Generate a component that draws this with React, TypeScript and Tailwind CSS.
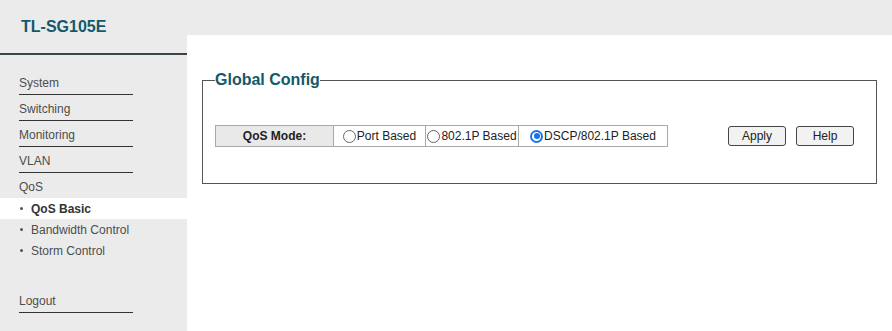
import React from "react";

const menu = ["System", "Switching", "Monitoring", "VLAN"];
const subMenu = [
  { label: "QoS Basic", active: true },
  { label: "Bandwidth Control", active: false },
  { label: "Storm Control", active: false },
];
const modes = [
  { label: "Port Based", width: "w-[92px]", checked: false },
  { label: "802.1P Based", width: "w-[93px]", checked: false },
  { label: "DSCP/802.1P Based", width: "w-[148px]", checked: true },
];

const Radio = ({ checked }: { checked: boolean }) =>
  checked ? (
    <span className="w-[13px] h-[13px] rounded-full bg-[#1a73e8] flex items-center justify-center shrink-0">
      <span className="w-[9px] h-[9px] rounded-full bg-white flex items-center justify-center">
        <span className="w-[6px] h-[6px] rounded-full bg-[#1a73e8]" />
      </span>
    </span>
  ) : (
    <span className="w-[13px] h-[13px] rounded-full border-[1.5px] border-[#666] bg-white shrink-0" />
  );

const App = () => {
  return (
    <div
      className="w-full h-[331px] bg-[#ebebeb] flex text-[12px] overflow-hidden"
      style={{ fontFamily: '"Liberation Sans", Arial, sans-serif' }}
    >
      {/* sidebar */}
      <div className="w-[187px] shrink-0 flex flex-col">
        <div className="h-[55px] border-b-2 border-[#3a464b] pt-[18px] pl-[21px]">
          <div className="text-[16px] leading-[18px] font-bold text-[#13596a]">
            TL-SG105E
          </div>
        </div>
        <div className="mt-[14px] flex flex-col">
          {menu.map((m) => (
            <a
              key={m}
              className="ml-[19px] w-[114px] pt-[7px] pb-[4px] leading-[14px] border-b border-[#333] text-[#4d4d4d]"
            >
              {m}
            </a>
          ))}
          <div className="ml-[19px] pt-[7px] leading-[14px] text-[#4d4d4d]">
            QoS
          </div>
          <div className="mt-[4px] flex flex-col">
            {subMenu.map((s) => (
              <div
                key={s.label}
                className={`h-[21px] flex items-center pl-[20px] ${
                  s.active ? "bg-white font-bold text-[#333]" : "text-[#4d4d4d]"
                }`}
              >
                <span className="w-[3px] h-[3px] rounded-full bg-[#555] mr-[8px]" />
                {s.label}
              </div>
            ))}
          </div>
          <a className="mt-[26px] ml-[19px] w-[114px] pt-[7px] pb-[4px] leading-[14px] border-b border-[#333] text-[#4d4d4d]">
            Logout
          </a>
        </div>
      </div>

      {/* main */}
      <div className="flex-1 mt-[35px] bg-white px-[15px] pt-[36px]">
        <fieldset className="border border-[#555] px-[12px] pt-[36px] pb-[36px]">
          <legend className="text-[16px] leading-[18px] font-bold text-[#13596a] p-0">
            Global Config
          </legend>
          <div className="flex items-start">
            <div className="flex h-[22px] border border-[#a9a9a9] text-[#222]">
              <div className="w-[118px] bg-[#e9e9e9] border-r border-[#a9a9a9] font-bold flex items-center justify-center">
                QoS Mode:
              </div>
              {modes.map((m, i) => (
                <div
                  key={m.label}
                  className={`${m.width} flex items-center justify-center gap-[1px] ${
                    i < modes.length - 1 ? "border-r border-[#a9a9a9]" : ""
                  }`}
                >
                  <Radio checked={m.checked} />
                  <span>{m.label}</span>
                </div>
              ))}
            </div>
            <div className="ml-[60px] mt-[1px] flex gap-[10px]">
              <button className="w-[58px] h-[20px] rounded-[3px] border border-[#444] bg-[#f2f2f2] text-[#222] leading-none">
                Apply
              </button>
              <button className="w-[58px] h-[20px] rounded-[3px] border border-[#444] bg-[#f2f2f2] text-[#222] leading-none">
                Help
              </button>
            </div>
          </div>
        </fieldset>
      </div>
    </div>
  );
};

export default App;
